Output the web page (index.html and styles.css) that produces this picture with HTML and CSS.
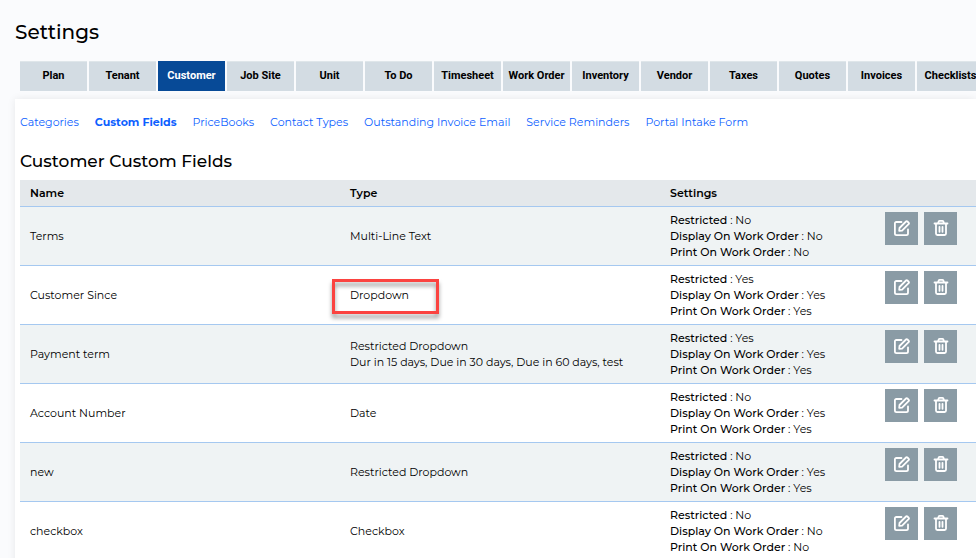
FILE: index.html
```html
<!DOCTYPE html>
<html lang="en">
<head>
    <meta charset="UTF-8">
    <meta name="viewport" content="width=device-width, initial-scale=1.0">
    <title>Settings</title>
    <link rel="stylesheet" href="styles.css">
</head>
<body>
    <svg class="sprite" aria-hidden="true">
        <symbol id="icon-edit" viewBox="0 0 16 16">
            <path d="M7.5 2H2.4C1.5 2 .9 2.7.9 3.6v9.9c0 .9.7 1.6 1.6 1.6h9.9c.9 0 1.6-.7 1.6-1.6V9.5"/>
            <path d="M5.2 10.9l.3-2.9L12 1.5c.4-.4 1-.4 1.4 0l1.2 1.2c.4.4.4 1 0 1.4l-6.5 6.5z"/>
        </symbol>
        <symbol id="icon-trash" viewBox="0 0 16 16">
            <path d="M1.5 3.5h13M5 3.3l.6-1.6c.2-.5.5-.8 1-.8h2.8c.5 0 .8.3 1 .8l.6 1.6M3 3.8v9.8c0 .8.6 1.4 1.4 1.4h7.2c.8 0 1.4-.6 1.4-1.4V3.8"/>
            <path d="M6.5 6.8v5M9.5 6.8v5"/>
        </symbol>
    </svg>

    <h1>Settings</h1>

    <nav class="tabs">
        <a href="#">Plan</a>
        <a href="#">Tenant</a>
        <a href="#" class="active">Customer</a>
        <a href="#">Job Site</a>
        <a href="#">Unit</a>
        <a href="#">To Do</a>
        <a href="#">Timesheet</a>
        <a href="#">Work Order</a>
        <a href="#">Inventory</a>
        <a href="#">Vendor</a>
        <a href="#">Taxes</a>
        <a href="#">Quotes</a>
        <a href="#">Invoices</a>
        <a href="#">Checklists</a>
    </nav>

    <main class="panel">
        <nav class="subnav">
            <a href="#">Categories</a>
            <a href="#" class="active">Custom Fields</a>
            <a href="#">PriceBooks</a>
            <a href="#">Contact Types</a>
            <a href="#">Outstanding Invoice Email</a>
            <a href="#">Service Reminders</a>
            <a href="#">Portal Intake Form</a>
        </nav>

        <h2>Customer Custom Fields</h2>

        <table>
            <colgroup>
                <col class="col-name">
                <col class="col-type">
                <col class="col-settings">
                <col class="col-actions">
            </colgroup>
            <thead>
                <tr>
                    <th>Name</th>
                    <th>Type</th>
                    <th>Settings</th>
                    <th></th>
                </tr>
            </thead>
            <tbody>
                <tr>
                    <td>Terms</td>
                    <td>Multi-Line Text</td>
                    <td><b>Restricted</b> : No<br><b>Display On Work Order</b> : No<br><b>Print On Work Order</b> : No</td>
                    <td class="actions">
                        <button type="button" aria-label="Edit"><svg><use href="#icon-edit"/></svg></button>
                        <button type="button" aria-label="Delete"><svg><use href="#icon-trash"/></svg></button>
                    </td>
                </tr>
                <tr>
                    <td>Customer Since</td>
                    <td><span class="marked">Dropdown</span></td>
                    <td><b>Restricted</b> : Yes<br><b>Display On Work Order</b> : Yes<br><b>Print On Work Order</b> : Yes</td>
                    <td class="actions">
                        <button type="button" aria-label="Edit"><svg><use href="#icon-edit"/></svg></button>
                        <button type="button" aria-label="Delete"><svg><use href="#icon-trash"/></svg></button>
                    </td>
                </tr>
                <tr>
                    <td>Payment term</td>
                    <td>Restricted Dropdown<br>Dur in 15 days, Due in 30 days, Due in 60 days, test</td>
                    <td><b>Restricted</b> : Yes<br><b>Display On Work Order</b> : Yes<br><b>Print On Work Order</b> : Yes</td>
                    <td class="actions">
                        <button type="button" aria-label="Edit"><svg><use href="#icon-edit"/></svg></button>
                        <button type="button" aria-label="Delete"><svg><use href="#icon-trash"/></svg></button>
                    </td>
                </tr>
                <tr>
                    <td>Account Number</td>
                    <td>Date</td>
                    <td><b>Restricted</b> : No<br><b>Display On Work Order</b> : Yes<br><b>Print On Work Order</b> : Yes</td>
                    <td class="actions">
                        <button type="button" aria-label="Edit"><svg><use href="#icon-edit"/></svg></button>
                        <button type="button" aria-label="Delete"><svg><use href="#icon-trash"/></svg></button>
                    </td>
                </tr>
                <tr>
                    <td>new</td>
                    <td>Restricted Dropdown</td>
                    <td><b>Restricted</b> : No<br><b>Display On Work Order</b> : Yes<br><b>Print On Work Order</b> : Yes</td>
                    <td class="actions">
                        <button type="button" aria-label="Edit"><svg><use href="#icon-edit"/></svg></button>
                        <button type="button" aria-label="Delete"><svg><use href="#icon-trash"/></svg></button>
                    </td>
                </tr>
                <tr>
                    <td>checkbox</td>
                    <td>Checkbox</td>
                    <td><b>Restricted</b> : No<br><b>Display On Work Order</b> : No<br><b>Print On Work Order</b> : No</td>
                    <td class="actions">
                        <button type="button" aria-label="Edit"><svg><use href="#icon-edit"/></svg></button>
                        <button type="button" aria-label="Delete"><svg><use href="#icon-trash"/></svg></button>
                    </td>
                </tr>
            </tbody>
        </table>
    </main>
</body>
</html>
```
FILE: styles.css
```css
* {
    box-sizing: border-box;
}

html {
    scrollbar-width: none;
}

body {
    margin: 0;
    padding: 16px 0 0 15px;
    overflow-x: hidden;
    background-color: #fafbfd;
    color: #000;
    font-family: Montserrat, Inter, sans-serif;
    font-size: 11px;
    line-height: 16px;
}

h1 {
    margin: 0 0 13px;
    font-size: 20px;
    font-weight: 500;
    line-height: 32px;
}

h2 {
    margin: 0 0 7px;
    font-size: 17px;
    font-weight: 500;
    line-height: 24px;
}

.sprite {
    display: none;
}

.tabs {
    display: flex;
    gap: 2px;
    padding-left: 5px;
    margin-bottom: 8px;
}

.tabs a {
    flex: 0 0 67px;
    height: 30px;
    border-top: 1px solid #dfe6ea;
    background-color: #d3dce3;
    color: #000;
    font-family: Roboto, sans-serif;
    font-weight: 700;
    line-height: 27px;
    text-align: center;
    text-decoration: none;
    white-space: nowrap;
}

.tabs a.active {
    border-top-color: #074a97;
    background-color: #074a97;
    color: #fff;
}

.panel {
    padding: 15px 0 15px 5px;
    background-color: #fff;
    box-shadow: 0 0 8px rgba(0, 0, 0, 0.08);
}

.subnav {
    display: flex;
    gap: 16px;
    margin-bottom: 19px;
}

.subnav a {
    color: #0d5fff;
    text-decoration: none;
    white-space: nowrap;
}

.subnav a.active {
    font-weight: 700;
}

table {
    width: 100%;
    border-collapse: separate;
    border-spacing: 0;
    table-layout: fixed;
}

.col-name,
.col-type {
    width: 320px;
}

.col-settings {
    width: 215px;
}

th,
td {
    padding: 5px 10px;
    border-bottom: 1px solid #a5c8f0;
    text-align: left;
}

th {
    background-color: #e4e8eb;
    font-weight: 600;
}

tbody tr:nth-child(odd) {
    background-color: #eff3f4;
}

b {
    font-weight: 500;
}

.actions {
    padding-right: 0;
    vertical-align: top;
    white-space: nowrap;
    font-size: 0;
}

.actions button {
    width: 33px;
    height: 33px;
    padding: 0 0 1px;
    margin-right: 6px;
    border: 0;
    background-color: #8a9ba5;
}

.actions svg {
    display: block;
    width: 16px;
    height: 16px;
    margin: 0 auto;
    overflow: visible;
    fill: none;
    stroke: #fff;
    stroke-width: 1.8;
    stroke-linejoin: round;
    stroke-linecap: round;
}

/* red frame around the highlighted value */
.marked {
    position: relative;
}

.marked::after {
    content: "";
    position: absolute;
    top: -9px;
    left: -18px;
    box-sizing: border-box;
    width: 107px;
    height: 35px;
    border: 3px solid #fb4340;
    filter: drop-shadow(0 4px 2px rgba(0, 0, 0, 0.4));
}
```
